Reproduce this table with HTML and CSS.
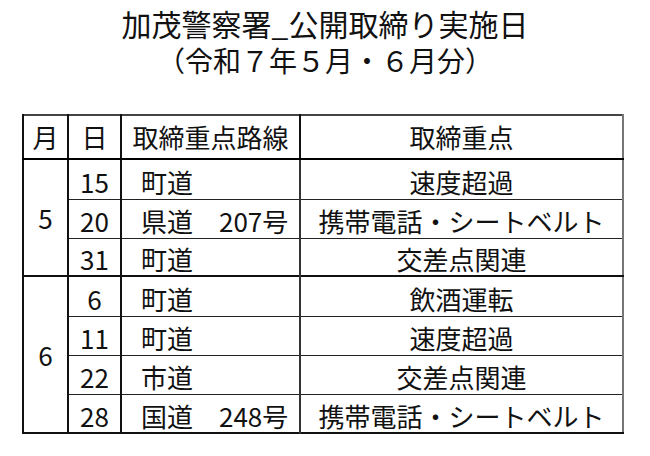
FILE: index.html
```html
<!DOCTYPE html>
<html lang="ja">
<head>
<meta charset="utf-8">
<title>加茂警察署_公開取締り実施日</title>
<link rel="stylesheet" href="styles.css">
</head>
<body>
<div class="title">
  <div class="line1">加茂警察署_公開取締り実施日</div>
  <div class="line2">（令和７年５月・６月分）</div>
</div>
<table class="sched">
  <colgroup>
    <col class="c-mon">
    <col class="c-day">
    <col class="c-road">
    <col class="c-point">
  </colgroup>
  <thead>
    <tr class="head">
      <th>月</th><th>日</th><th>取締重点路線</th><th>取締重点</th>
    </tr>
  </thead>
  <tbody class="grp">
    <tr class="h40"><td class="mon" rowspan="3">5</td><td class="day">15</td><td class="road">町道</td><td class="point">速度超過</td></tr>
    <tr class="h39"><td class="day">20</td><td class="road">県道　207号</td><td class="point">携帯電話・シートベルト</td></tr>
    <tr class="h38"><td class="day">31</td><td class="road">町道</td><td class="point">交差点関連</td></tr>
  </tbody>
  <tbody class="grp">
    <tr class="h40"><td class="mon" rowspan="4">6</td><td class="day">6</td><td class="road">町道</td><td class="point">飲酒運転</td></tr>
    <tr class="h39"><td class="day">11</td><td class="road">町道</td><td class="point">速度超過</td></tr>
    <tr class="h39"><td class="day">22</td><td class="road">市道</td><td class="point">交差点関連</td></tr>
    <tr class="h39"><td class="day">28</td><td class="road">国道　248号</td><td class="point">携帯電話・シートベルト</td></tr>
  </tbody>
</table>
</body>
</html>
```
FILE: styles.css
```css
html, body {
  margin: 0;
  padding: 0;
  background: #ffffff;
}
body {
  width: 650px;
  height: 456px;
  overflow: hidden;
  font-family: "Noto Sans CJK JP", "Noto Sans", sans-serif;
  color: #111111;
}
.title {
  padding-top: 5px;
  text-align: center;
  line-height: 37px;
}
.line1 {
  font-size: 30px;
}
.line2 {
  font-size: 28px;
}
.sched {
  margin: 35px 0 0 22px;
  width: 602px;
  table-layout: fixed;
  border-collapse: collapse;
  border-left: 2px solid #111111;
  border-bottom: 2px solid #111111;
  border-top: 2px solid #444444;
  border-right: 2px solid #777777;
  font-size: 26px;
}
.c-mon { width: 45px; }
.c-day { width: 53px; }
.c-road { width: 179px; }
.c-point { width: 323px; }
.sched th,
.sched td {
  padding: 0;
  line-height: 1;
  text-align: center;
  vertical-align: middle;
  border-left: 2px solid #111111;
  border-top: 1px solid #222222;
  white-space: nowrap;
}
.sched th {
  font-weight: normal;
}
.head {
  height: 44px;
}
.head th {
  border-bottom: 2px solid #000000;
}
.grp {
  border-top: 2px solid #111111;
}
.h40 { height: 40px; }
.h39 { height: 39px; }
.h38 { height: 38px; }
.sched td.day,
.sched td.road,
.sched td.point {
  padding-top: 5px;
}
.sched td.road {
  text-align: left;
  padding-left: 19px;
}
.sched td.point {
  border-left: 2px solid #333333;
}
</style>
```
